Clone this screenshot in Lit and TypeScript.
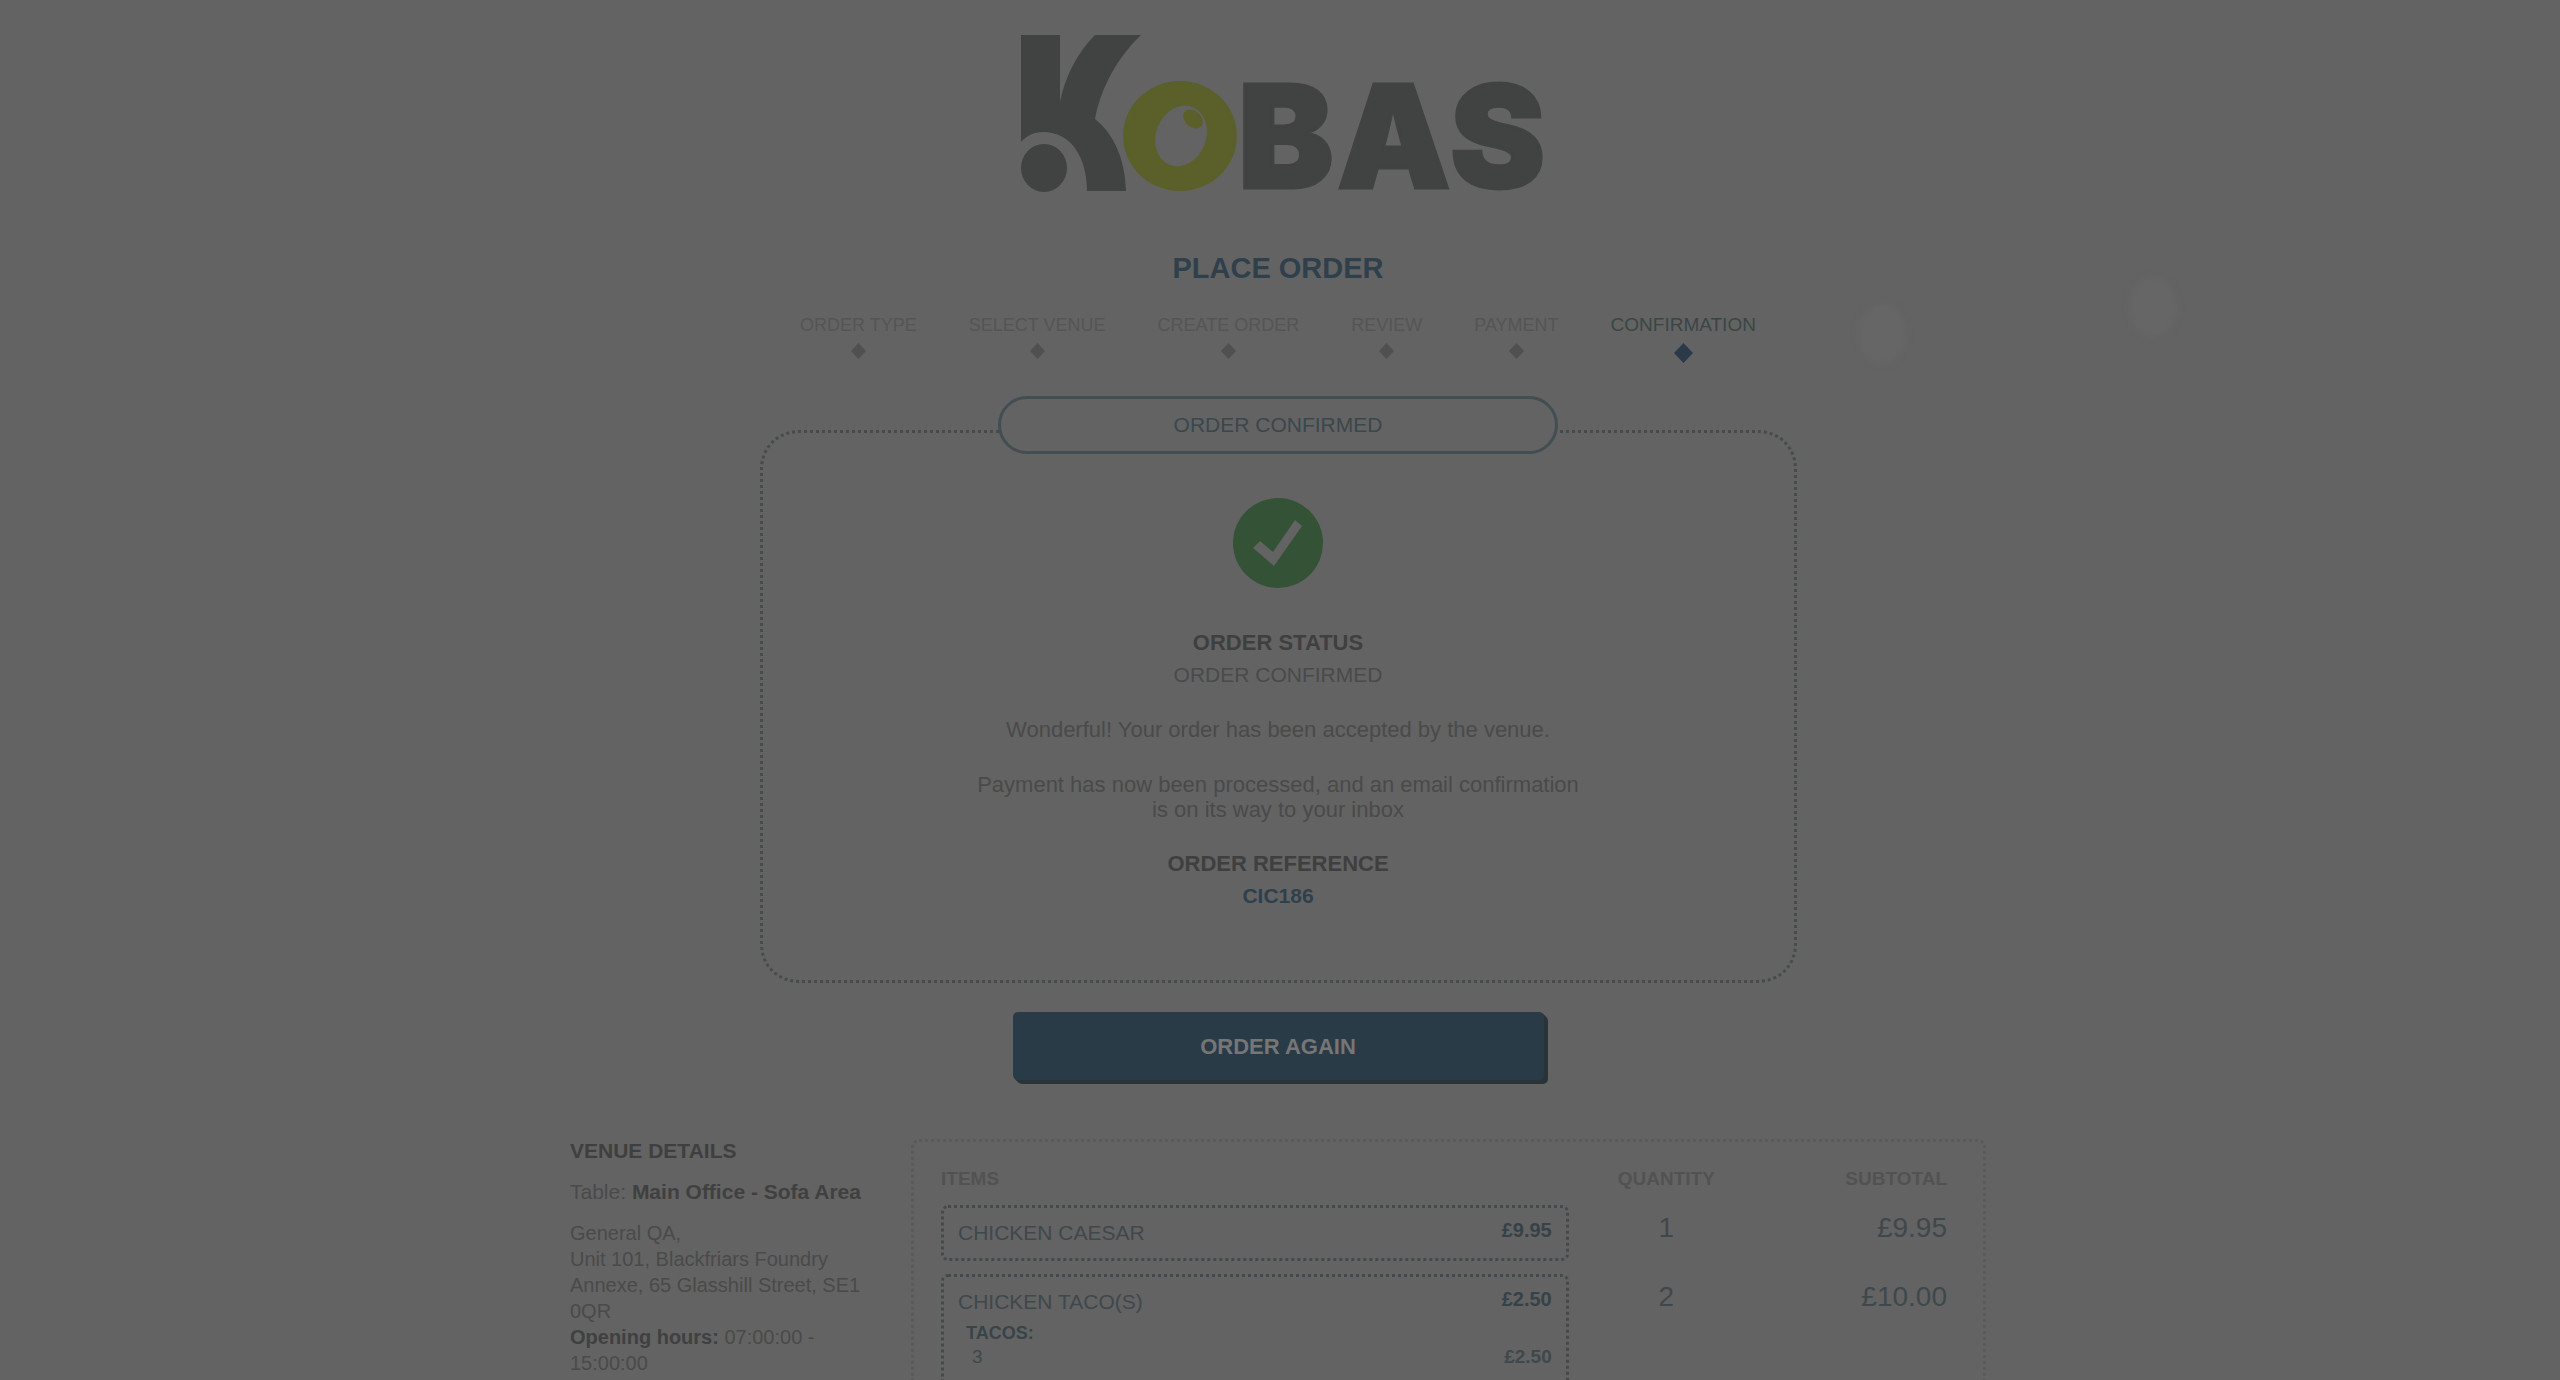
import { LitElement, html, svg, css, nothing } from "lit";
import { customElement, property } from "lit/decorators.js";
import { classMap } from "lit/directives/class-map.js";

interface OrderLine {
  name: string;
  price: string;
  quantity: number;
  subtotal: string;
  extras?: { group: string; value: string; price: string };
}

const STEPS = ["Order type", "Select venue", "Create order", "Review", "Payment", "Confirmation"];

const LINES: OrderLine[] = [
  { name: "Chicken Caesar", price: "£9.95", quantity: 1, subtotal: "£9.95" },
  {
    name: "Chicken Taco(s)",
    price: "£2.50",
    quantity: 2,
    subtotal: "£10.00",
    extras: { group: "Tacos:", value: "3", price: "£2.50" },
  },
];

@customElement("kobas-logo")
export class KobasLogo extends LitElement {
  static styles = css`
    :host { display: block; }
    .logo { display: block; width: 530px; height: 160px; overflow: visible; }
    .ink { fill: #404342; }
    .olive { fill: #5b602b; }
    .paper { fill: #636363; }
    .word { font: 900 143px Inter, "Liberation Sans", sans-serif; stroke: #404342; stroke-width: 3; }
  `;

  render() {
    return html`
      <svg class="logo" viewBox="-8 0 530 160" role="img" aria-label="Kobas">
        ${svg`
          <path class="ink" d="M0 0H39V67C44 42 56 18 74 0H120C97 22 80 52 74 84C93 99 104 124 105 156H66C66 122 50 97 22 97C13 97 5 101 0 107Z" />
          <ellipse class="ink" cx="23" cy="133" rx="23" ry="24" />
          <ellipse class="olive" cx="159" cy="101" rx="57" ry="55" />
          <ellipse class="paper" cx="160" cy="101" rx="25" ry="31" transform="rotate(22 160 101)" />
          <ellipse class="olive" cx="172" cy="84" rx="11" ry="8" transform="rotate(42 172 84)" />
          <text class="ink word" x="217 316 429" y="153">BAS</text>
        `}
      </svg>
    `;
  }
}

@customElement("order-steps")
export class OrderSteps extends LitElement {
  @property({ type: Number }) current = 0;

  static styles = css`
    :host { display: block; }
    .steps { display: flex; justify-content: center; gap: 52px; margin: 0; padding: 0; list-style: none; }
    .step {
      display: flex; flex-direction: column; align-items: center; gap: 8px;
      font-size: 18px; line-height: 20px; color: #555555; text-transform: uppercase;
    }
    .step.active { font-size: 19px; color: #3a4646; }
    .mark { display: block; width: 15px; height: 16px; fill: #505050; }
    .active .mark { width: 19px; height: 20px; fill: #2a3a48; }
  `;

  render() {
    return html`
      <ol class="steps">
        ${STEPS.map(
          (name, i) => html`
            <li
              class=${classMap({ step: true, active: i === this.current })}
              aria-current=${i === this.current ? "step" : nothing}
            >
              ${name}
              <svg class="mark" viewBox="0 0 10 10" preserveAspectRatio="none" aria-hidden="true">
                <path d="M5 0L10 5L5 10L0 5Z" />
              </svg>
            </li>
          `,
        )}
      </ol>
    `;
  }
}

@customElement("order-items")
export class OrderItems extends LitElement {
  static styles = css`
    :host { display: block; }
    .panel { border: 3px dotted #5a5a5a; border-radius: 8px; padding: 26px 36px 40px 27px; }
    .items { width: 100%; border-collapse: collapse; table-layout: fixed; color: #3f484c; }
    .head { padding: 0 0 15px; font-size: 19px; line-height: 22px; font-weight: 700; color: #525252; text-transform: uppercase; }
    .col-item { width: 62.4%; text-align: left; }
    .col-qty { width: 19.4%; text-align: center; }
    .col-sub { text-align: right; }
    .cell { padding: 0 0 13px; vertical-align: top; }
    .figure { font-size: 28px; line-height: 46px; }
    .box { min-height: 32px; border: 3px dotted #434a4d; border-radius: 7px; padding: 10px 14px 8px; }
    .line { display: flex; justify-content: space-between; align-items: flex-start; }
    .name { font-size: 21px; line-height: 30px; text-transform: uppercase; }
    .price { font-size: 20px; line-height: 24px; font-weight: 700; color: #364249; }
    .extras { padding: 4px 0 12px 8px; line-height: 24px; }
    .group { font-size: 18px; font-weight: 700; color: #38444a; text-transform: uppercase; }
    .extra { font-size: 19px; padding-left: 6px; }
    .extra-price { font-weight: 700; }
  `;

  render() {
    return html`
      <div class="panel">
        <table class="items">
          <thead>
            <tr>
              <th class="head col-item" scope="col">Items</th>
              <th class="head col-qty" scope="col">Quantity</th>
              <th class="head col-sub" scope="col">Subtotal</th>
            </tr>
          </thead>
          <tbody>
            ${LINES.map(
              (l) => html`
                <tr>
                  <td class="cell">
                    <div class="box">
                      <div class="line">
                        <span class="name">${l.name}</span>
                        <span class="price">${l.price}</span>
                      </div>
                      ${l.extras
                        ? html`
                            <div class="extras">
                              <div class="group">${l.extras.group}</div>
                              <div class="line extra">
                                <span>${l.extras.value}</span>
                                <span class="extra-price">${l.extras.price}</span>
                              </div>
                            </div>
                          `
                        : nothing}
                    </div>
                  </td>
                  <td class="cell figure col-qty">${l.quantity}</td>
                  <td class="cell figure col-sub">${l.subtotal}</td>
                </tr>
              `,
            )}
          </tbody>
        </table>
      </div>
    `;
  }
}

@customElement("app-root")
export class AppRoot extends LitElement {
  static styles = css`
    :host {
      display: block; position: relative; box-sizing: border-box; height: 100vh; overflow: hidden;
      padding: 35px 4px 0 0;
      background: #636363; color: #4a4a4a;
      font-family: "Liberation Sans", Arial, sans-serif;
    }
    .page { display: flex; flex-direction: column; align-items: center; }
    .title { margin: 56px 0 30px; font-size: 29px; line-height: 34px; font-weight: 700; color: #2f404c; text-transform: uppercase; }
    .card {
      box-sizing: border-box; width: 100%; max-width: 1037px; margin-top: 67px; padding-bottom: 72px;
      display: flex; flex-direction: column; align-items: center; text-align: center;
      border: 3px dotted #464b4b; border-radius: 38px;
    }
    .pill {
      box-sizing: border-box; width: 560px; margin: -37px 0 44px; padding: 14px;
      border: 3px solid #434e52; border-radius: 29px; background: #636363;
      font-size: 21px; line-height: 24px; font-weight: 400; color: #3b474c; text-transform: uppercase;
    }
    .tick { display: block; width: 90px; height: 90px; margin-bottom: 43px; }
    .disc { fill: #335236; }
    .check { fill: #636363; }
    .label { margin: 0 0 8px; font-size: 22px; line-height: 24px; font-weight: 700; color: #3f3f3f; text-transform: uppercase; }
    .value { margin: 0; font-size: 21px; line-height: 24px; text-transform: uppercase; }
    .message { max-width: 620px; margin: 30px 0 0; font-size: 22px; line-height: 25px; }
    .card .reference { margin-top: 30px; }
    .code { font-weight: 700; color: #2f404c; }
    .again {
      width: 531px; height: 68px; margin-top: 29px; padding: 2px 0 0; border: 0; border-radius: 5px;
      background: #2a3b48; color: #767676;
      box-shadow: 1px 1px #2a3338, 2px 2px #2a3338, 3px 3px #2a3338, 4px 4px #2a3338;
      font: 700 22px/24px "Liberation Sans", Arial, sans-serif; text-transform: uppercase;
    }
    .details { display: grid; grid-template-columns: 300px 1fr; gap: 41px; width: 100%; max-width: 1416px; margin-top: 59px; }
    .venue { font-size: 20px; line-height: 26px; }
    .venue .label { margin-bottom: 16px; font-size: 21px; }
    .table { margin: 0 0 15px; font-size: 21px; }
    .address { margin: 0; font-style: normal; }
    .strong { color: #404040; }
    .spot { position: absolute; width: 48px; height: 60px; border-radius: 50%; background: #666666; filter: blur(3px); }
    .spot-near { left: 73.5%; top: 304px; margin-left: -24px; }
    .spot-far { left: 84.1%; top: 277px; margin-left: -24px; }
  `;

  render() {
    return html`
      <main class="page">
        <kobas-logo></kobas-logo>
        <h1 class="title">Place order</h1>
        <order-steps .current=${5}></order-steps>

        <section class="card">
          <h2 class="pill">Order confirmed</h2>
          <svg class="tick" viewBox="0 0 90 90" aria-hidden="true">
            <circle class="disc" cx="45" cy="45" r="45" />
            <path class="check" d="M62 22L69 28L41 68L20 50L27 43L40 54Z" />
          </svg>
          <h3 class="label">Order status</h3>
          <p class="value">Order confirmed</p>
          <p class="message">Wonderful! Your order has been accepted by the venue.</p>
          <p class="message">Payment has now been processed, and an email confirmation<br />is on its way to your inbox</p>
          <h3 class="label reference">Order reference</h3>
          <p class="value code">CIC186</p>
        </section>

        <button class="again" type="button">Order again</button>

        <div class="details">
          <section class="venue">
            <h3 class="label">Venue details</h3>
            <p class="table">Table: <strong class="strong">Main Office - Sofa Area</strong></p>
            <address class="address">
              General QA,<br />Unit 101, Blackfriars Foundry<br />Annexe, 65 Glasshill Street, SE1 0QR
            </address>
            <div><strong class="strong">Opening hours:</strong> 07:00:00 -<br />15:00:00</div>
          </section>
          <order-items></order-items>
        </div>
      </main>
      <span class="spot spot-near" aria-hidden="true"></span>
      <span class="spot spot-far" aria-hidden="true"></span>
    `;
  }
}
